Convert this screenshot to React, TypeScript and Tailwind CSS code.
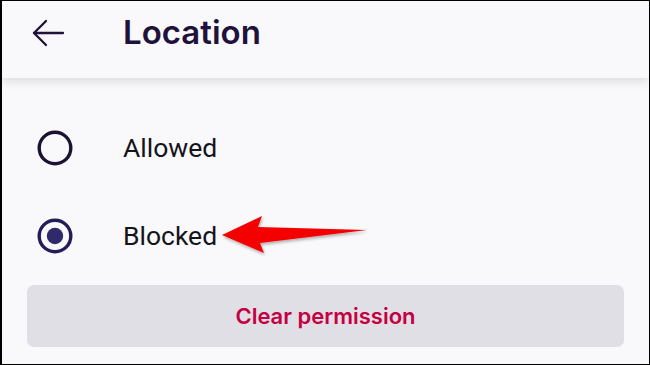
import React from "react";

function Radio({ checked }: { checked: boolean }) {
  return (
    <svg width="36" height="36" viewBox="0 0 36 36">
      <circle cx="18" cy="18" r="15.8" fill="none" stroke={checked ? "#241d57" : "#1c1334"} strokeWidth="3.4" />
      {checked && <circle cx="18" cy="18" r="8.2" fill="#2f2a6b" />}
    </svg>
  );
}

export default function App() {
  return (
    <div className="relative w-[650px] h-[365px] overflow-hidden bg-[#f9f9fb] border border-black border-l-2 flex flex-col" style={{ fontFamily: "Roboto, 'Noto Sans', sans-serif" }}>
      <div className="h-[77px] shrink-0 flex items-center pb-[14px] bg-[#f9f9fb] shadow-[0_3px_10px_rgba(0,0,0,0.13)] relative z-10">
        <div className="w-[121px] shrink-0 pl-[30px] flex items-center">
          <svg width="34" height="30" viewBox="0 0 34 30" fill="none" stroke="#20123a" strokeWidth="2.3" strokeLinecap="round" strokeLinejoin="round">
            <path d="M2 15 H31" />
            <path d="M14 3 L2 15 L14 27" />
          </svg>
        </div>
        <div className="text-[33px] font-semibold text-[#20123a] leading-none" style={{ fontFamily: "Inter, 'Noto Sans', sans-serif" }}>
          Location
        </div>
      </div>
      <div className="flex flex-col pt-[26px]">
        <div className="h-[88px] flex items-center">
          <div className="w-[121px] shrink-0 pl-[35px] flex items-center"><Radio checked={false} /></div>
          <div className="text-[26.5px] text-[#15141a] leading-none">Allowed</div>
        </div>
        <div className="h-[88px] flex items-center">
          <div className="w-[121px] shrink-0 pl-[35px] flex items-center"><Radio checked={true} /></div>
          <div className="text-[26.5px] text-[#15141a] leading-none">Blocked</div>
        </div>
      </div>
      <div className="px-[25px] mt-[5px]">
        <div className="h-[62px] rounded-[7px] bg-[#e0dfe5] flex items-center justify-center">
          <span className="text-[22px] font-semibold text-[#c50042]" style={{ fontFamily: "Inter, 'Noto Sans', sans-serif" }}>Clear permission</span>
        </div>
      </div>
      <svg className="absolute left-0 top-0 pointer-events-none" width="650" height="365" viewBox="0 0 650 365">
        <defs>
          <filter id="sh" x="-10%" y="-30%" width="130%" height="160%">
            <feDropShadow dx="1" dy="2" stdDeviation="1.5" floodColor="#000" floodOpacity="0.3" />
          </filter>
        </defs>
        <polygon points="220,234 260,215 256,226 365,229 258,242 262,252" fill="#f40000" filter="url(#sh)" />
      </svg>
    </div>
  );
}
